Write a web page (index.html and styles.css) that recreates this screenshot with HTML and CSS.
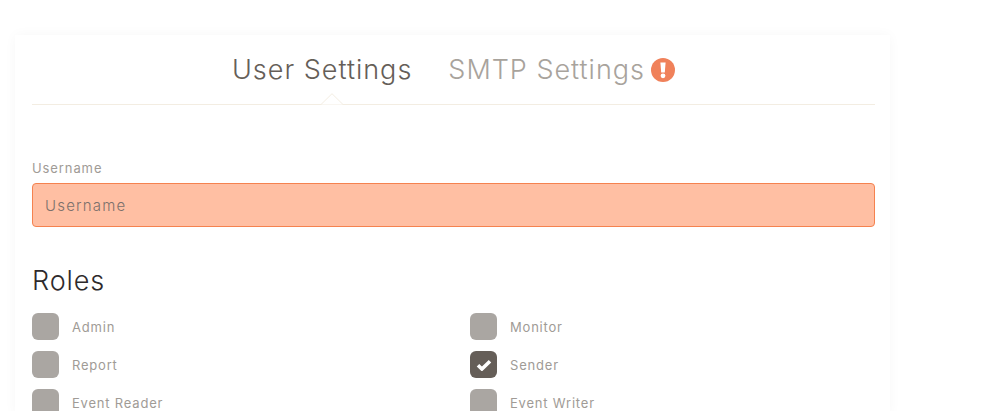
FILE: index.html
```html
<!DOCTYPE html>
<html lang="en">
<head>
<meta charset="utf-8">
<title>Settings</title>
<link rel="stylesheet" href="styles.css">
</head>
<body>
<main class="card">
  <nav class="tabs">
    <a class="tab tab-active">User Settings</a>
    <a class="tab tab-idle">SMTP Settings
      <svg class="alert" viewBox="0 0 24 24" width="24" height="24" aria-hidden="true">
        <circle cx="12" cy="12" r="12" fill="#f0815a"/>
        <path d="M9.4 4.4h5.2l-.8 10h-3.6z" fill="#fff"/>
        <circle cx="12" cy="17.8" r="2.4" fill="#fff"/>
      </svg>
    </a>
    <svg class="notch" viewBox="0 0 24 12" width="24" height="12" aria-hidden="true">
      <path d="M0 11.5h1L12 .7 23 11.5h1" fill="#fff" stroke="#f3ede2"/>
    </svg>
  </nav>
  <label class="field-label" for="username">Username</label>
  <input class="field-input" id="username" placeholder="Username">
  <h2 class="roles-title">Roles</h2>
  <div class="roles">
    <div class="role"><span class="box"></span><span class="role-name">Admin</span></div>
    <div class="role"><span class="box"></span><span class="role-name">Monitor</span></div>
    <div class="role"><span class="box"></span><span class="role-name">Report</span></div>
    <div class="role"><span class="box box-on">
      <svg viewBox="0 0 16 12" width="16" height="12" aria-hidden="true"><path d="M2 6.2l3.9 3.8L14 2.2" fill="none" stroke="#fff" stroke-width="3.6"/></svg>
    </span><span class="role-name">Sender</span></div>
    <div class="role"><span class="box"></span><span class="role-name">Event Reader</span></div>
    <div class="role"><span class="box"></span><span class="role-name">Event Writer</span></div>
  </div>
</main>
</body>
</html>
```
FILE: styles.css
```css
html, body {
  margin: 0;
  height: 411px;
  overflow: hidden;
  background: #fff;
}
body {
  padding: 35px 0 0 15px;
  box-sizing: border-box;
  font-family: "Inter", "Open Sans", sans-serif;
}
.card {
  width: 875px;
  box-sizing: border-box;
  padding: 0 15px 0 17px;
  background: #fff;
  box-shadow: 0 0 12px rgba(0, 0, 0, 0.035);
}
.tabs {
  position: relative;
  height: 70px;
  box-sizing: border-box;
  border-bottom: 1px solid #f3ede2;
  display: flex;
  justify-content: center;
  gap: 36px;
  padding-top: 17px;
}
.tab {
  height: 36px;
  font-size: 27px;
  line-height: 36px;
  font-weight: 300;
  letter-spacing: 1px;
  display: flex;
  align-items: center;
  gap: 6px;
  white-space: nowrap;
}
.tab-active { color: #655e58; }
.tab-idle { color: #a8a39c; }
.notch {
  position: absolute;
  left: 288px;
  bottom: -1px;
}
.field-label {
  display: block;
  margin-top: 55px;
  font-size: 13px;
  line-height: 16px;
  color: #a09b96;
  letter-spacing: 0.9px;
}
.field-input {
  display: block;
  width: 100%;
  height: 44px;
  margin-top: 7px;
  box-sizing: border-box;
  padding: 0 12px;
  border: 1px solid #f5824f;
  border-radius: 4px;
  background: #ffbfa3;
  font: 300 15px "Inter", sans-serif;
  letter-spacing: 1.2px;
  outline: none;
}
.field-input::placeholder { color: #7b706b; opacity: 1; }
.roles-title {
  margin: 37px 0 0;
  font-size: 27px;
  line-height: 34px;
  font-weight: 300;
  letter-spacing: 0.9px;
  color: #2e2a2c;
}
.roles {
  display: grid;
  grid-template-columns: 438px 1fr;
  row-gap: 11px;
  margin-top: 15px;
}
.role {
  display: flex;
  align-items: center;
  gap: 13px;
  height: 27px;
}
.box {
  width: 27px;
  height: 27px;
  border-radius: 6px;
  background: #aaa6a2;
  display: flex;
  align-items: center;
  justify-content: center;
  flex: none;
}
.box-on { background: #655e58; }
.role-name {
  font-size: 13px;
  color: #a09b96;
  letter-spacing: 0.8px;
}
```
